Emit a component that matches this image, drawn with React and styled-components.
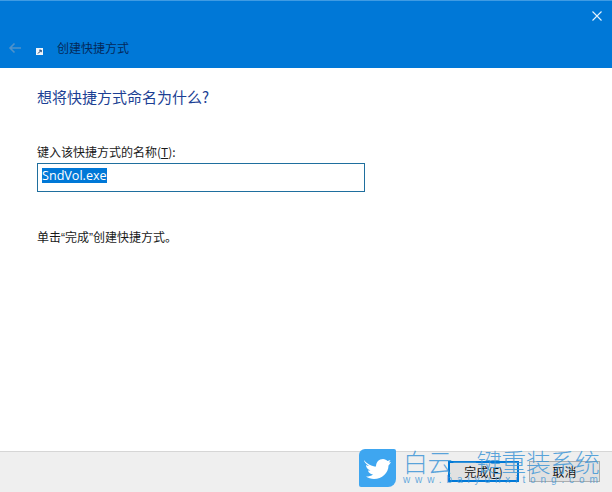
import React from 'react';
import styled, { createGlobalStyle } from 'styled-components';

const Global = createGlobalStyle`
  html, body { margin: 0; padding: 0; background: #fff; }
  body { font-family: "Noto Sans CJK SC", "Liberation Sans", sans-serif; }
`;

const Win = styled.div`
  position: relative;
  width: 612px;
  height: 492px;
  display: flex;
  flex-direction: column;
  overflow: hidden;
  background: #fff;
`;

const Header = styled.div`
  height: 68px;
  flex: none;
  box-sizing: border-box;
  background: #0078d7;
  border-top: 1px solid #3f9be3;
  display: flex;
  flex-direction: column;
`;

const CloseRow = styled.div`
  height: 38px;
  display: flex;
  justify-content: flex-end;
  padding: 10px 10px 0 0;
  box-sizing: border-box;
`;

const TitleRow = styled.div`
  display: flex;
  align-items: center;
  height: 17px;
  padding-left: 8px;
`;

const ShortcutIcon = styled.svg`
  margin: 7px 0 0 14px;
`;

const Title = styled.span`
  margin-left: 14px;
  font-size: 12px;
  line-height: 17px;
  color: #04295a;
`;

const Body = styled.div`
  flex: 1;
  padding: 18px 0 0 37px;
`;

const Heading = styled.h1`
  margin: 0;
  font-size: 15px;
  font-weight: 400;
  line-height: 22px;
  color: #1c3f94;
`;

const Label = styled.div`
  margin-top: 35px;
  font-size: 12px;
  line-height: 17px;
  color: #1a1a1a;
`;

const Field = styled.div`
  margin-top: 3px;
  width: 328px;
  height: 29px;
  box-sizing: border-box;
  border: 1px solid #1f6f9e;
  padding: 4px 0 0 4px;
`;

const Selected = styled.span`
  display: block;
  width: max-content;
  font-family: "Open Sans", "Liberation Sans", sans-serif;
  font-size: 12.6px;
  line-height: 15px;
  background: #0078d7;
  color: #fff;
`;

const Note = styled.div`
  margin-top: 38px;
  font-family: "Liberation Sans", "Noto Sans CJK SC", sans-serif;
  font-size: 12px;
  line-height: 17px;
  color: #1a1a1a;
`;

const Footer = styled.div`
  height: 41px;
  flex: none;
  box-sizing: border-box;
  background: #efefef;
  border-top: 1px solid #d6d6d6;
  display: flex;
  justify-content: flex-end;
  align-items: flex-start;
  gap: 10px;
  padding: 9px 12px 0 0;
`;

const Button = styled.button`
  width: 71px;
  height: 21px;
  box-sizing: border-box;
  padding: 0;
  background: #e1e1e1;
  border: ${p => (p.$primary ? '2px solid #0078d7' : '1px solid #adadad')};
  font-family: inherit;
  font-size: 12px;
  line-height: 17px;
  color: #111;
`;

const Watermark = styled.div`
  position: absolute;
  left: 359px;
  top: 449px;
  display: flex;
  gap: 7px;
  pointer-events: none;
`;

const Badge = styled.div`
  width: 37px;
  height: 38px;
  background: #3ea6f0;
  border-radius: 6px 2px 8px 2px;
  display: flex;
  align-items: center;
  justify-content: center;
`;

const BrandText = styled.div`
  display: flex;
  flex-direction: column;
  margin-top: -1px;
`;

const BrandName = styled.div`
  font-size: 25px;
  font-weight: 300;
  line-height: 26px;
  white-space: nowrap;
  letter-spacing: -0.45px;
  color: rgba(62, 150, 215, 0.85);
`;

const BrandUrl = styled.div`
  font-family: "Liberation Sans", sans-serif;
  font-size: 10px;
  line-height: 11px;
  letter-spacing: 4.9px;
  white-space: nowrap;
  color: rgba(62, 150, 215, 0.8);
`;

export default function App() {
  return (
    <Win>
      <Global />
      <Header>
        <CloseRow>
          <svg width="10" height="10" viewBox="0 0 10 10">
            <path d="M0.5 0.5L9.500 9.500M9.500 0.500L0.500 9.500" stroke="#e6f3fc" strokeWidth="1.1" fill="none" />
          </svg>
        </CloseRow>
        <TitleRow>
          <svg width="14" height="12" viewBox="0 0 14 12">
            <path d="M13 6H2M6.500 1.500L2 6l4.500 4.500" stroke="#4f92ca" strokeWidth="1.6" fill="none" />
          </svg>
          <ShortcutIcon width="7" height="7" viewBox="0 0 7 7">
            <rect width="7" height="7" fill="#eef4fa" />
            <path d="M2 5.500L5 2.500M3.200 2.200H5.200V4.200" stroke="#123a6b" strokeWidth="1" fill="none" />
          </ShortcutIcon>
          <Title>创建快捷方式</Title>
        </TitleRow>
      </Header>
      <Body>
        <Heading>想将快捷方式命名为什么?</Heading>
        <Label>键入该快捷方式的名称(<u>T</u>):</Label>
        <Field>
          <Selected>SndVol.exe</Selected>
        </Field>
        <Note>单击“完成”创建快捷方式。</Note>
      </Body>
      <Footer>
        <Button $primary>完成(<u>F</u>)</Button>
        <Button>取消</Button>
      </Footer>
      <Watermark>
        <Badge>
          <svg width="29" height="25" viewBox="0 0 29 25">
            <path
              d="M1 4C4 8 9 10.500 13 10.500C13 6 16 3 20 3C22 3 23.500 4 24.500 5L27.500 4L26 6.500L28 6C27 8 26 9 25.500 9.500C25.500 17 19 23 11 23C8 23 5 22 3 20.500C6 20.500 8 20 10 18.500C7 18 5.500 16.500 5 14.500H7.500C4.500 13.500 3 11.500 3 9C4 9.500 5 10 6 10C3 8 1 6 1 4Z"
              fill="#fff"
            />
          </svg>
        </Badge>
        <BrandText>
          <BrandName>白云一键重装系统</BrandName>
          <BrandUrl>www.baiyunxitong.com</BrandUrl>
        </BrandText>
      </Watermark>
    </Win>
  );
}
